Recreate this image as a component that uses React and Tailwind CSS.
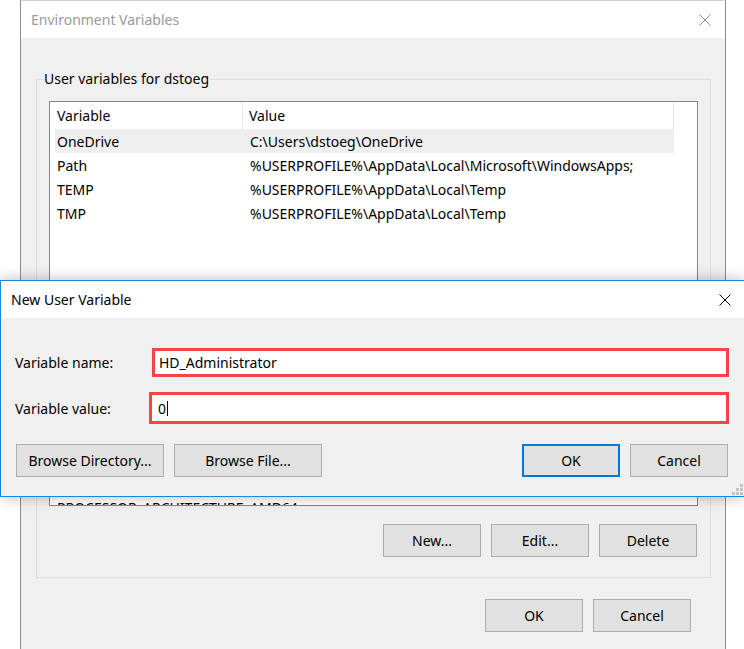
import React from "react"

const userVars = [
  ["OneDrive", "C:\\Users\\dstoeg\\OneDrive"],
  ["Path", "%USERPROFILE%\\AppData\\Local\\Microsoft\\WindowsApps;"],
  ["TEMP", "%USERPROFILE%\\AppData\\Local\\Temp"],
  ["TMP", "%USERPROFILE%\\AppData\\Local\\Temp"],
]

function CloseIcon({className}) {
  return (
    <svg width="12" height="12" viewBox="0 0 12 12" className={className}>
      <path d="M0.5 0.5L11.5 11.5M11.5 0.5L0.5 11.5" stroke="currentColor" strokeWidth="1" fill="none" />
    </svg>
  )
}

function Grip() {
  const dots = [[8, 0], [4, 4], [8, 4], [0, 8], [4, 8], [8, 8]]
  return (
    <svg width="11" height="11" viewBox="0 0 11 11">
      {dots.map(([x, y]) => (
        <rect key={x + "-" + y} x={x} y={y} width="3" height="3" fill="#c2c2c2" />
      ))}
    </svg>
  )
}

function Button({children, wide, primary}) {
  return (
    <button
      className={`${wide ? "w-[148px]" : "w-[98px]"} h-[33px] bg-[#e1e1e1] text-[14px] text-black ${
        primary ? "border-2 border-[#0078d7]" : "border border-[#adadad]"
      }`}
    >
      {children}
    </button>
  )
}

export default function App() {
  return (
    <div className="relative w-[744px] h-[649px] overflow-hidden bg-white font-['Noto_Sans',sans-serif] text-[14px] text-black">
      {/* Environment Variables (background, inactive) */}
      <div className="ml-[20px] w-[706px] h-[660px] border-x border-t border-x-[#8c8c8c] border-t-[#cfcfcf] bg-[#f0f0f0] flex flex-col">
        <div className="h-[37px] shrink-0 bg-white flex items-center justify-between pl-[10px] pr-[14px]">
          <span className="text-[14px] text-[#9a9a9a]">Environment Variables</span>
          <CloseIcon className="text-[#8a8a8a]" />
        </div>

        <fieldset className="ml-[15px] mr-[14px] mt-[31px] border border-[#dcdcdc] pb-[20px]">
          <legend className="ml-[6px] px-[1px] leading-[20px] text-[14px]">User variables for dstoeg</legend>

          <div className="mx-[12px] mt-[12px] h-[405px] border border-[#828790] bg-white flex flex-col overflow-hidden">
            <div className="flex h-[27px] w-[624px] shrink-0 items-center border-r border-[#e5e5e5]">
              <div className="w-[193px] h-full pl-[7px] flex items-center border-r border-[#e5e5e5]">Variable</div>
              <div className="pl-[6px]">Value</div>
            </div>
            {userVars.map(([name, value], i) => (
              <div key={name} className={`ml-[5px] w-[619px] h-[24px] shrink-0 flex items-center ${i === 0 ? "bg-[#efefef]" : ""}`}>
                <div className="w-[189px] shrink-0 pl-[2px] truncate">{name}</div>
                <div className="pl-[6px] whitespace-nowrap">{value}</div>
              </div>
            ))}
            <div className="mt-auto -mb-[14px] ml-[5px] w-[619px] h-[24px] shrink-0 flex items-center">
              <div className="w-[189px] shrink-0 pl-[2px] truncate">PROCESSOR_ARCHITECTURE</div>
              <div className="pl-[6px]">AMD64</div>
            </div>
          </div>

          <div className="mt-[18px] pr-[13px] flex justify-end gap-[10px]">
            <Button>New...</Button>
            <Button>Edit...</Button>
            <Button>Delete</Button>
          </div>
        </fieldset>

        <div className="mt-[21px] pr-[34px] flex justify-end gap-[10px]">
          <Button>OK</Button>
          <Button>Cancel</Button>
        </div>
      </div>

      {/* New User Variable (active dialog on top) */}
      <div className="absolute left-0 top-[280px] w-[745px] h-[217px] border border-[#1c86d8] bg-[#f0f0f0] flex flex-col shadow-[0_0_14px_rgba(0,0,0,0.28)]">
        <div className="h-[37px] shrink-0 bg-white flex items-center justify-between pl-[10px] pr-[13px]">
          <span className="text-[14px]">New User Variable</span>
          <CloseIcon className="text-black" />
        </div>

        <div className="relative flex-1 pl-[14px] pr-[15px] pt-[30px]">
          <div className="flex items-center">
            <span className="w-[137px] shrink-0">Variable name:</span>
            <div className="flex-1 h-[29px] border-[3px] border-[#f24545] bg-white flex items-center pl-[4px]">HD_Administrator</div>
          </div>
          <div className="mt-[15px] flex items-center">
            <span className="w-[134px] shrink-0">Variable value:</span>
            <div className="flex-1 h-[32px] border-[3px] border-[#f24545] bg-white flex items-center pl-[6px]">
              <span>0</span>
              <span className="ml-px inline-block w-px h-[15px] bg-black" />
            </div>
          </div>
          <div className="mt-[20px] ml-[1px] mr-[1px] flex items-center">
            <div className="flex gap-[10px]">
              <Button wide>Browse Directory...</Button>
              <Button wide>Browse File...</Button>
            </div>
            <div className="ml-auto flex gap-[10px]">
              <Button primary>OK</Button>
              <Button>Cancel</Button>
            </div>
          </div>
          <div className="absolute right-[1px] bottom-[1px]">
            <Grip />
          </div>
        </div>
      </div>
    </div>
  )
}
